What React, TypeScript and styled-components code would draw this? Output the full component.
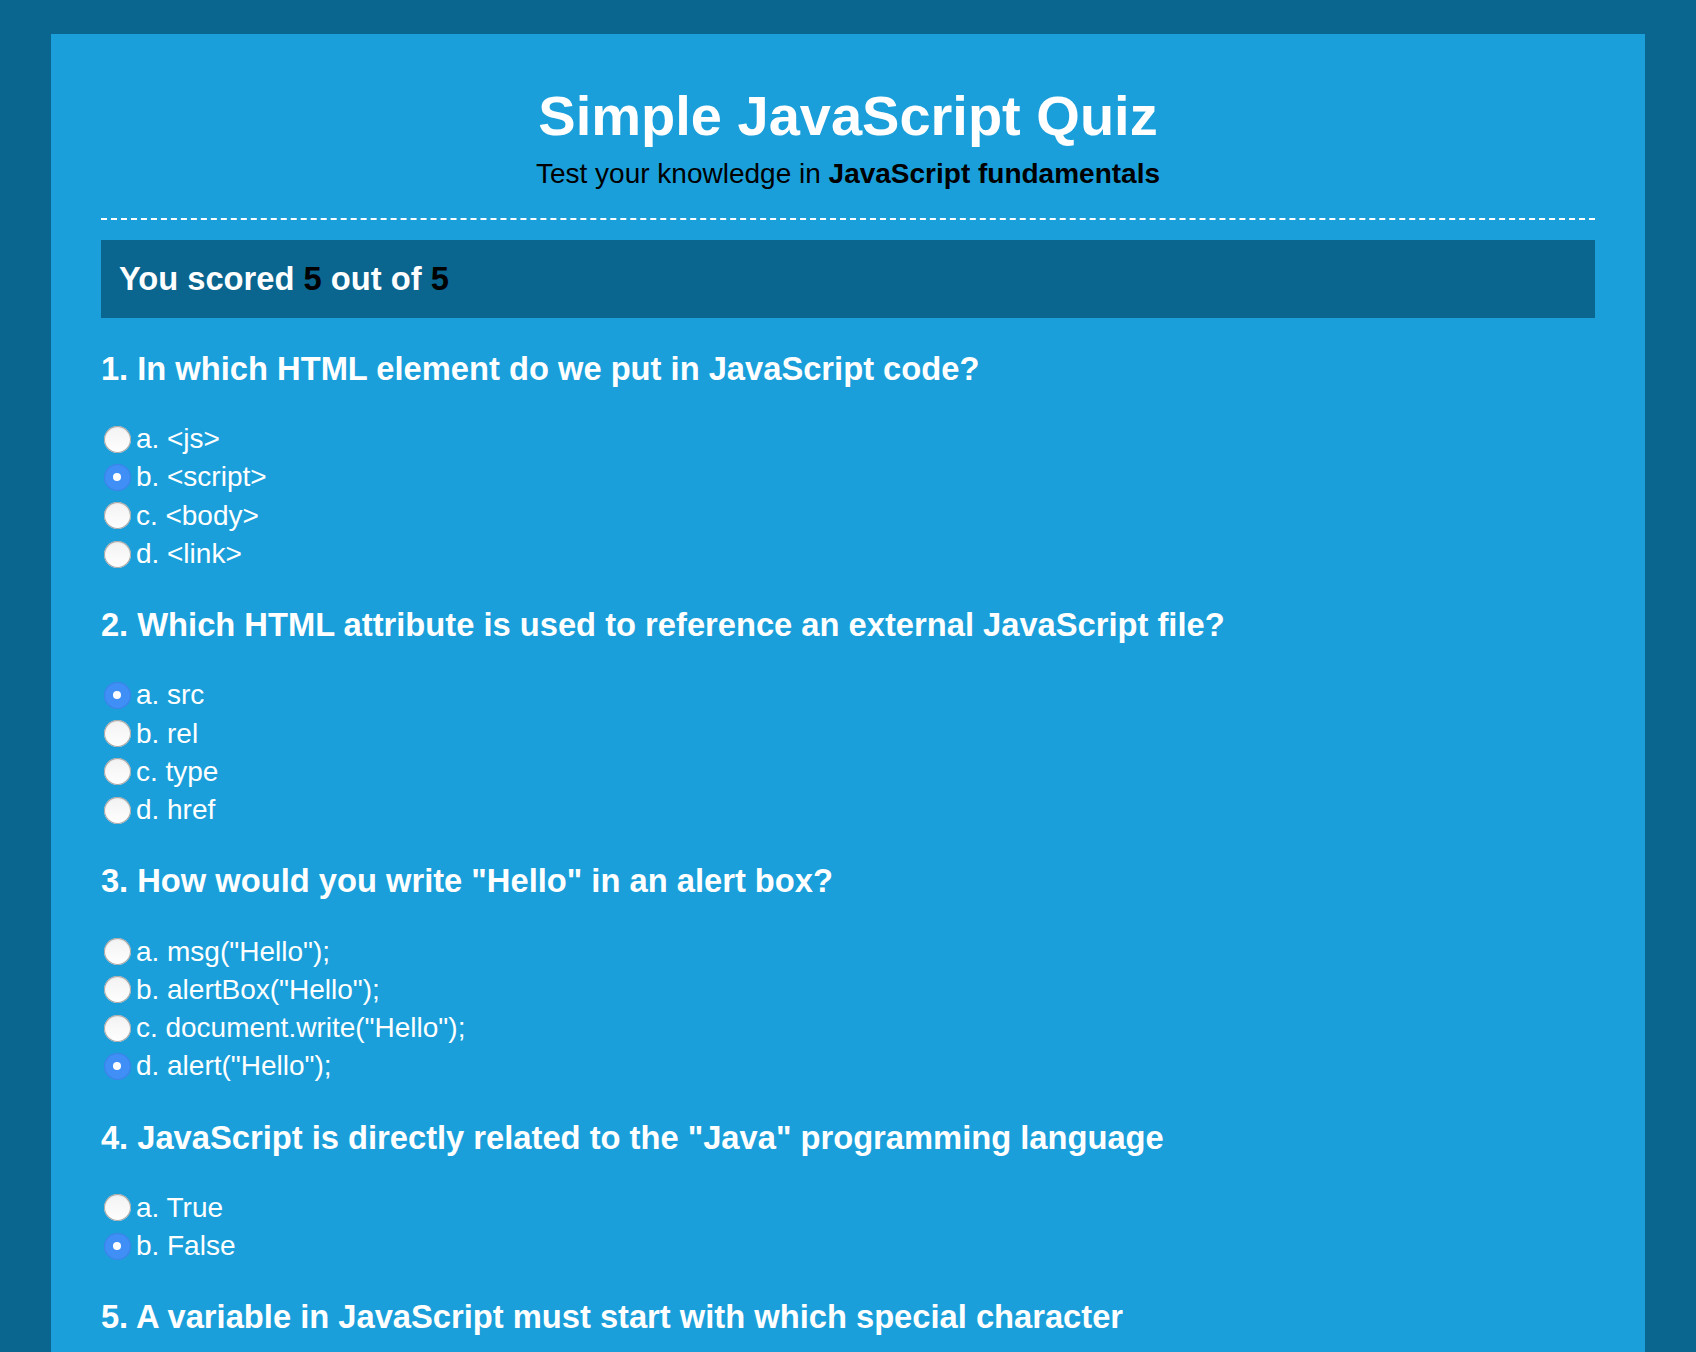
import React, { useState } from 'react';
import styled, { createGlobalStyle } from 'styled-components';

const GlobalStyle = createGlobalStyle`
  html, body {
    margin: 0;
    padding: 0;
    background: #0a658f;
  }
  body {
    font-family: "Liberation Sans", Arial, Helvetica, sans-serif;
    color: #fff;
  }
`;

type Question = {
  title: string;
  options: string[];
  answer: number;
};

const QUESTIONS: Question[] = [
  {
    title: 'In which HTML element do we put in JavaScript code?',
    options: ['<js>', '<script>', '<body>', '<link>'],
    answer: 1,
  },
  {
    title: 'Which HTML attribute is used to reference an external JavaScript file?',
    options: ['src', 'rel', 'type', 'href'],
    answer: 0,
  },
  {
    title: 'How would you write "Hello" in an alert box?',
    options: ['msg("Hello");', 'alertBox("Hello");', 'document.write("Hello");', 'alert("Hello");'],
    answer: 3,
  },
  {
    title: 'JavaScript is directly related to the "Java" programming language',
    options: ['True', 'False'],
    answer: 1,
  },
  {
    title: 'A variable in JavaScript must start with which special character',
    options: ['@', '$', '#', 'No Special Character'],
    answer: 3,
  },
];

const LETTERS = ['a', 'b', 'c', 'd'];

export default function App() {
  const [picked, setPicked] = useState<number[]>(QUESTIONS.map((q) => q.answer));

  const score = picked.filter((p, i) => p === QUESTIONS[i].answer).length;

  function pick(q: number, o: number) {
    setPicked((prev) => prev.map((p, i) => (i === q ? o : p)));
  }

  return (
    <>
      <GlobalStyle />
      <Panel>
        <Header>
          <Title>Simple JavaScript Quiz</Title>
          <Subtitle>
            Test your knowledge in <strong>JavaScript fundamentals</strong>
          </Subtitle>
        </Header>

        <Body>
          <ScoreBox>
            You scored <Num>{score}</Num> out of <Num>{QUESTIONS.length}</Num>
          </ScoreBox>

          {QUESTIONS.map((q, qi) => (
            <QuestionBlock key={qi}>
              <QuestionTitle>
                {qi + 1}. {q.title}
              </QuestionTitle>
              <Options>
                {q.options.map((opt, oi) => (
                  <OptionRow key={oi}>
                    <Radio
                      type="radio"
                      name={'q' + qi}
                      checked={picked[qi] === oi}
                      onChange={() => pick(qi, oi)}
                    />
                    {LETTERS[oi]}. {opt}
                  </OptionRow>
                ))}
              </Options>
            </QuestionBlock>
          ))}

          <Submit type="button">Submit Answers</Submit>
        </Body>
      </Panel>
    </>
  );
}

const Panel = styled.div`
  width: 94%;
  margin: 34px auto;
  background: #1a9fdb;
  padding: 50px 50px 60px;
  box-sizing: border-box;
`;

const Header = styled.header`
  text-align: center;
  padding-bottom: 29px;
  border-bottom: 2px dashed #fff;
`;

const Title = styled.h1`
  margin: 0;
  font-size: 56px;
  line-height: 64px;
  font-weight: 700;
  color: #fff;
`;

const Subtitle = styled.p`
  margin: 10px 0 0;
  font-size: 28px;
  line-height: 31px;
  color: #000;

  strong {
    font-weight: 700;
  }
`;

const Body = styled.main`
  display: flex;
  flex-direction: column;
  padding-top: 20px;
`;

const ScoreBox = styled.div`
  background: #0a658f;
  padding: 20px 18px;
  margin-bottom: 33px;
  font-size: 32.7px;
  line-height: 38px;
  font-weight: 700;
  color: #fff;
`;

const Num = styled.span`
  color: #000;
`;

const QuestionBlock = styled.section`
  display: flex;
  flex-direction: column;
  gap: 33px;
  margin-bottom: 34px;
`;

const QuestionTitle = styled.h3`
  margin: 0;
  font-size: 32.7px;
  line-height: 36px;
  font-weight: 700;
`;

const Options = styled.div`
  display: flex;
  flex-direction: column;
`;

const OptionRow = styled.label`
  display: flex;
  align-items: center;
  height: 38.3px;
  font-size: 28px;
  color: #fff;
  cursor: pointer;
`;

const Radio = styled.input`
  appearance: none;
  -webkit-appearance: none;
  width: 27px;
  height: 27px;
  margin: 0 5px 0 3px;
  border-radius: 50%;
  background: linear-gradient(#f2f2f2, #fff);
  box-shadow: inset 0 0 0 1px #a8a8a8, inset 0 1px 2px rgba(0, 0, 0, 0.15);
  position: relative;
  flex-shrink: 0;
  cursor: pointer;

  &:checked {
    background: #3f8ff6;
    box-shadow: inset 0 0 0 1px #3a83e6;
  }

  &:checked::after {
    content: '';
    position: absolute;
    left: 50%;
    top: 50%;
    width: 8px;
    height: 8px;
    margin: -4px 0 0 -4px;
    border-radius: 50%;
    background: #fff;
  }
`;

const Submit = styled.button`
  align-self: flex-start;
  padding: 12px 24px;
  font-family: inherit;
  font-size: 24px;
  font-weight: 700;
  color: #fff;
  background: #0a658f;
  border: none;
  cursor: pointer;
`;
